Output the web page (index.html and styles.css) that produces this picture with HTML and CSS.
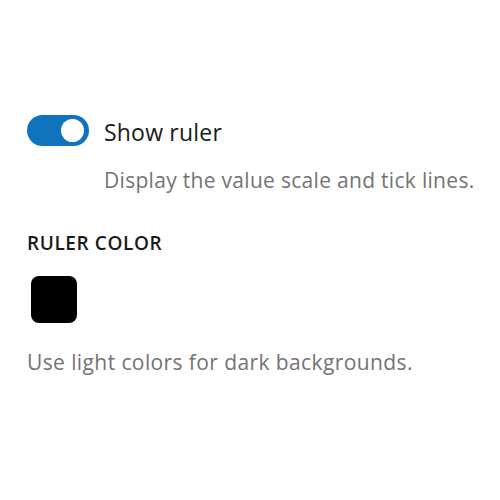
FILE: index.html
```html
<!DOCTYPE html>
<html lang="en">

<head>
    <meta charset="UTF-8">
    <meta name="viewport" content="width=device-width, initial-scale=1.0">
    <title>Ruler settings</title>
    <link rel="stylesheet" href="styles.css">
</head>

<body>
    <div class="panel">
        <div class="toggle-row">
            <span class="toggle on"><span class="knob"></span></span>
            <span class="toggle-label">Show ruler</span>
        </div>
        <p class="hint indented">Display the value scale and tick lines.</p>

        <h3 class="section-title">RULER COLOR</h3>
        <div class="swatch-row">
            <span class="swatch"></span>
        </div>
        <p class="hint">Use light colors for dark backgrounds.</p>
    </div>
</body>

</html>
```

FILE: styles.css
```css
body {
    font-family: "Open Sans", "Noto Sans", sans-serif;
    background-color: #fff;
    color: #1a1a1a;
    margin: 0;
    padding: 0;
}

.panel {
    padding: 113px 12px 0 27px;
}

.toggle-row {
    display: flex;
    align-items: center;
    gap: 15px;
}

.toggle {
    width: 62px;
    height: 31px;
    border-radius: 16px;
    background-color: #0f74bd;
    display: flex;
    align-items: center;
    justify-content: flex-end;
    padding: 0 5px;
    box-sizing: border-box;
}

.knob {
    width: 23px;
    height: 23px;
    border-radius: 50%;
    background-color: #fff;
}

.toggle-label {
    font-size: 23px;
    line-height: 31px;
    letter-spacing: 0.2px;
    padding-top: 4px;
}

.hint {
    color: #737373;
    font-size: 21px;
    line-height: 28px;
    letter-spacing: 0.4px;
    margin: 0;
}

.indented {
    margin: 18px 0 0 77px;
    letter-spacing: 0.3px;
}

.section-title {
    font-size: 19px;
    line-height: 26px;
    letter-spacing: 0.6px;
    font-weight: 600;
    margin: 36px 0 0;
}

.swatch-row {
    margin: 20px 0 0 4px;
}

.swatch {
    display: block;
    width: 46px;
    height: 47px;
    border-radius: 8px;
    background-color: #000;
}

.swatch-row + .hint {
    margin-top: 25px;
}
```
